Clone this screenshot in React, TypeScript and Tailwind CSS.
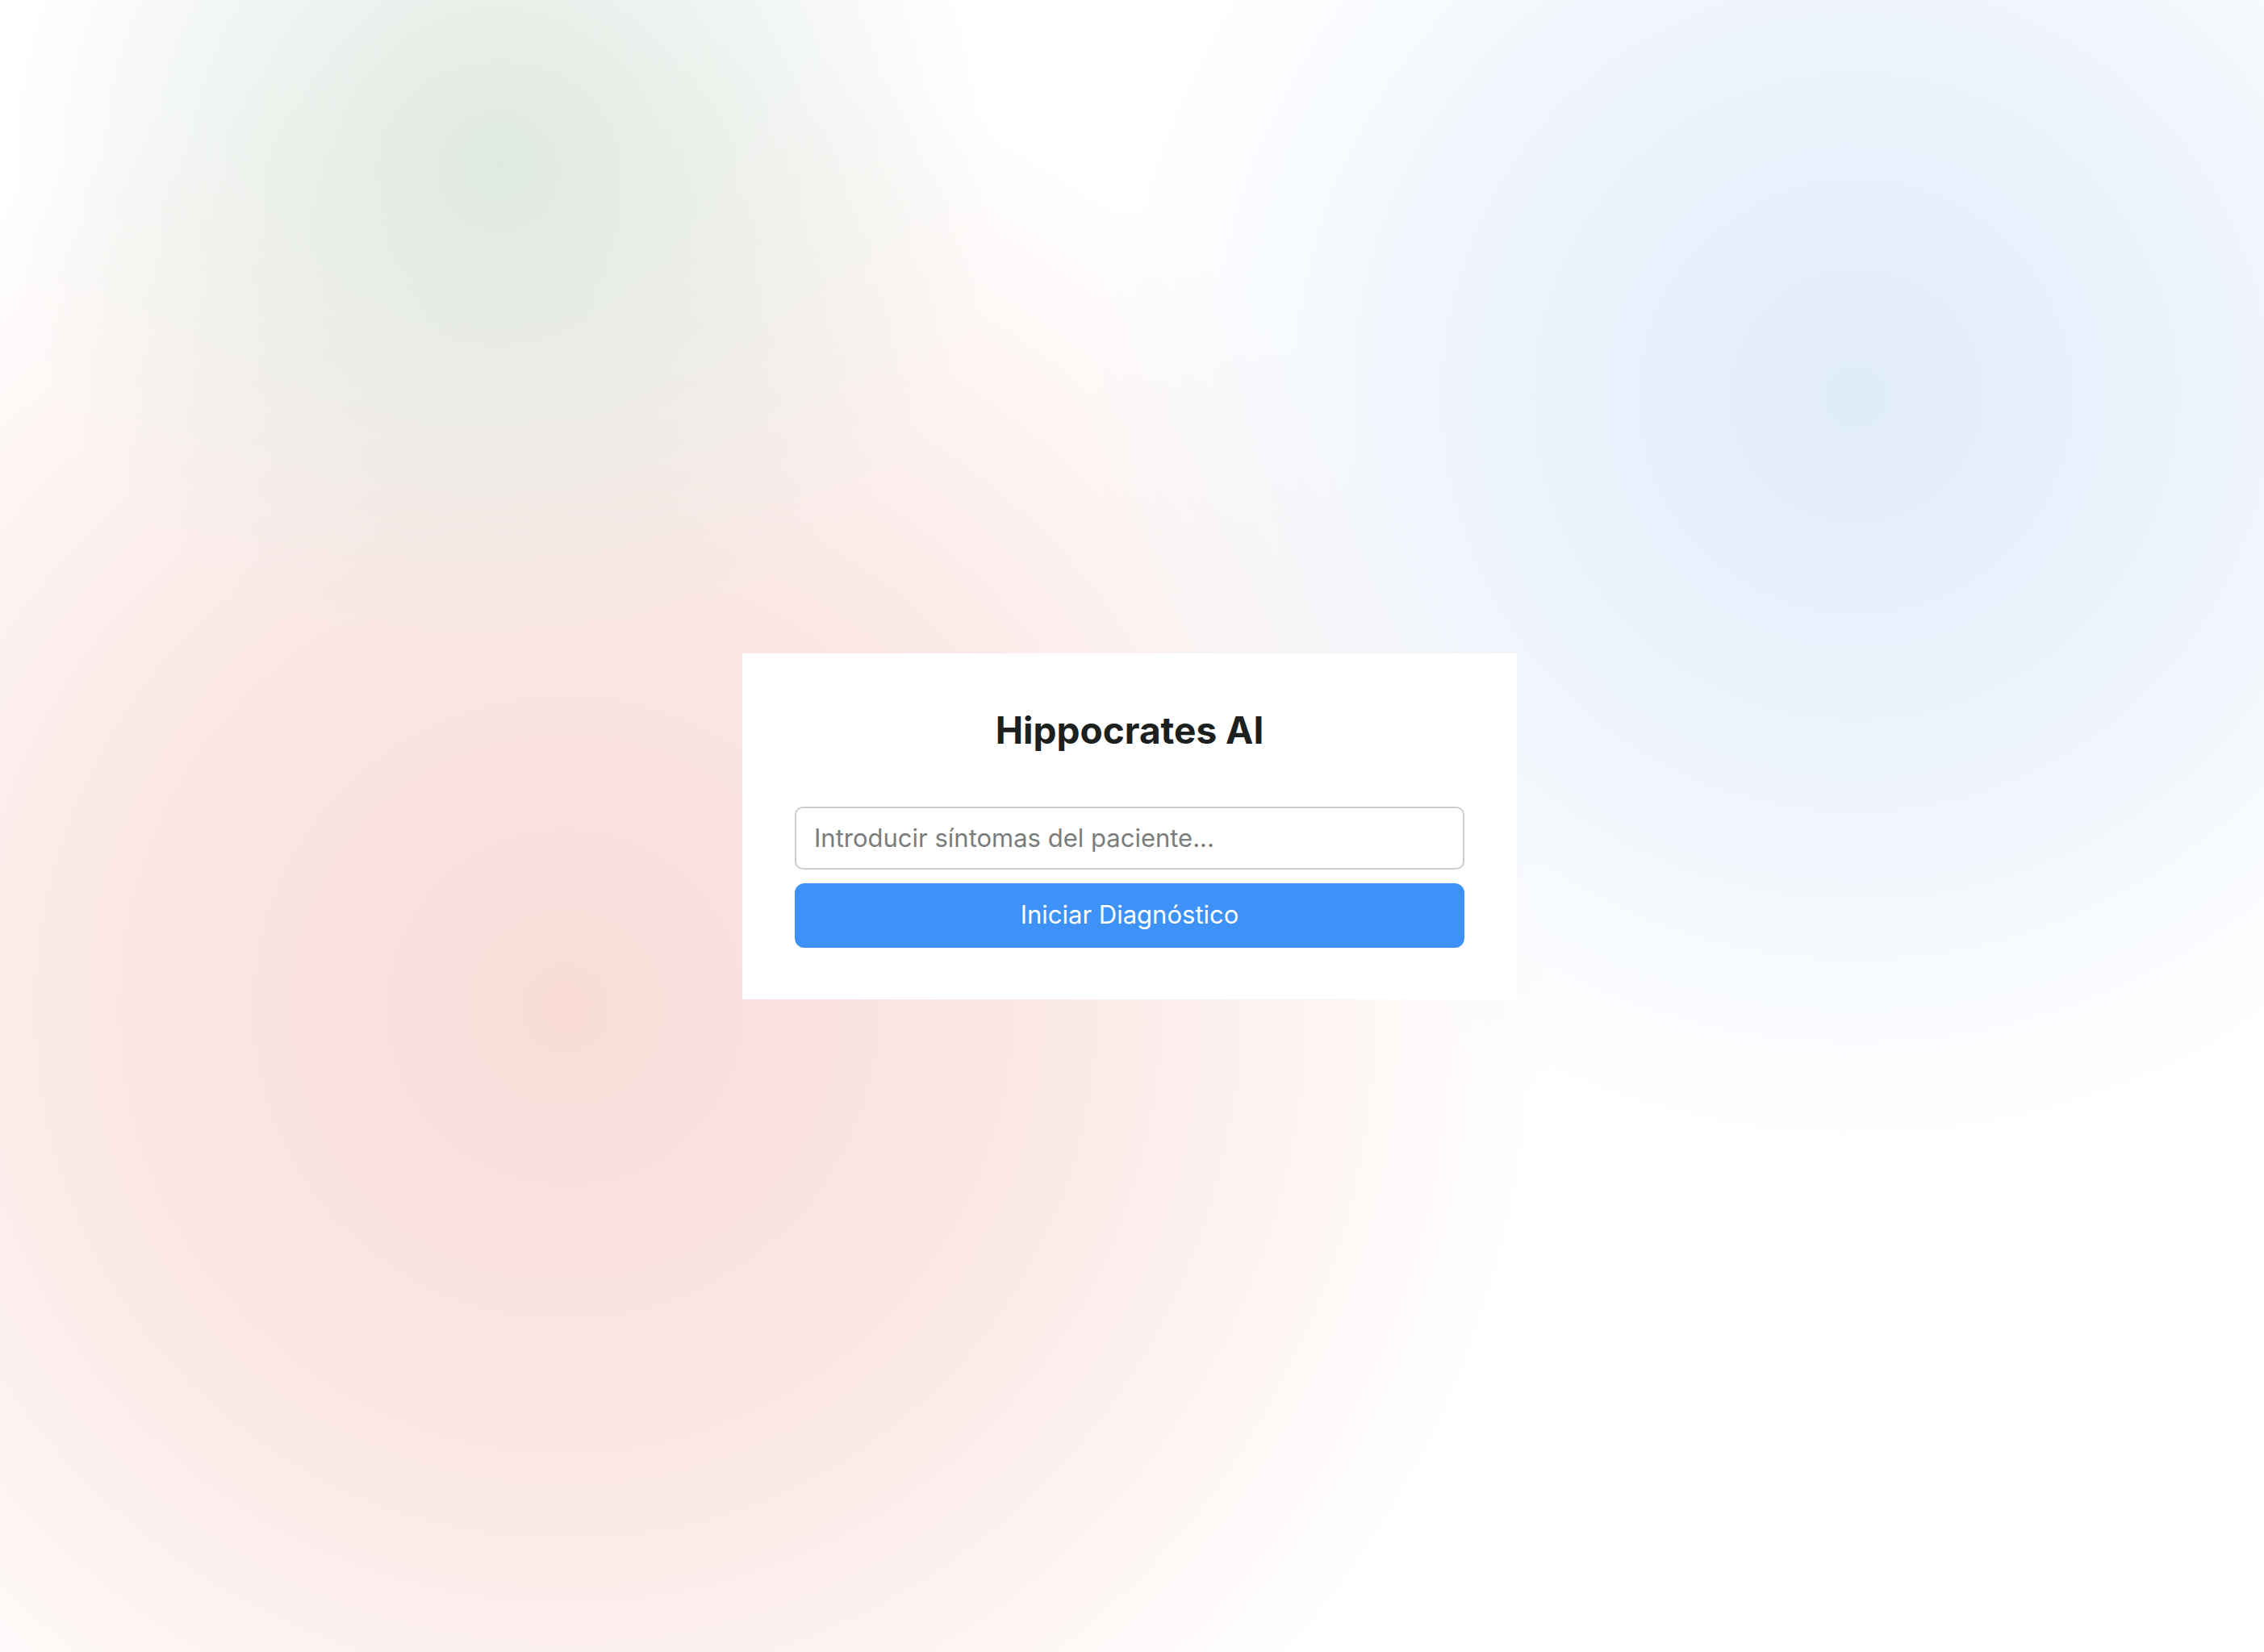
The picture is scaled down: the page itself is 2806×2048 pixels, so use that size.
import React, { useState } from "react";

export default function App() {
  const [symptoms, setSymptoms] = useState("");

  return (
    <div className="min-h-screen w-full flex items-center justify-center pr-[6px] bg-white bg-[radial-gradient(circle_at_22%_10%,#dfe9e1_0px,rgba(223,233,225,0.6)_260px,rgba(255,255,255,0)_620px),radial-gradient(circle_at_82%_24%,#e0ebfa_0px,rgba(224,235,250,0.6)_420px,rgba(255,255,255,0)_950px),radial-gradient(circle_at_25%_61%,#f9dcd8_0px,rgba(249,224,220,0.72)_600px,rgba(255,255,255,0)_1220px)] font-['Inter','Liberation_Sans',sans-serif]">
      <div className="w-[960px] bg-white px-[65px] pt-[72px] pb-[64px] flex flex-col">
        <h1 className="text-center text-[46px] leading-none font-bold text-[#1c2120]">
          Hippocrates AI
        </h1>
        <input
          type="text"
          value={symptoms}
          onChange={(e) => setSymptoms(e.target.value)}
          placeholder="Introducir síntomas del paciente..."
          className="mt-[72px] h-[78px] w-full rounded-[10px] border-2 border-[#cccccc] px-[22px] text-[31px] text-[#1c2120] placeholder:text-[#7a7d7c] outline-none"
        />
        <button className="mt-[17px] h-[80px] w-full rounded-[12px] bg-[#3d91f7] text-[31px] text-white">
          Iniciar Diagnóstico
        </button>
      </div>
    </div>
  );
}
